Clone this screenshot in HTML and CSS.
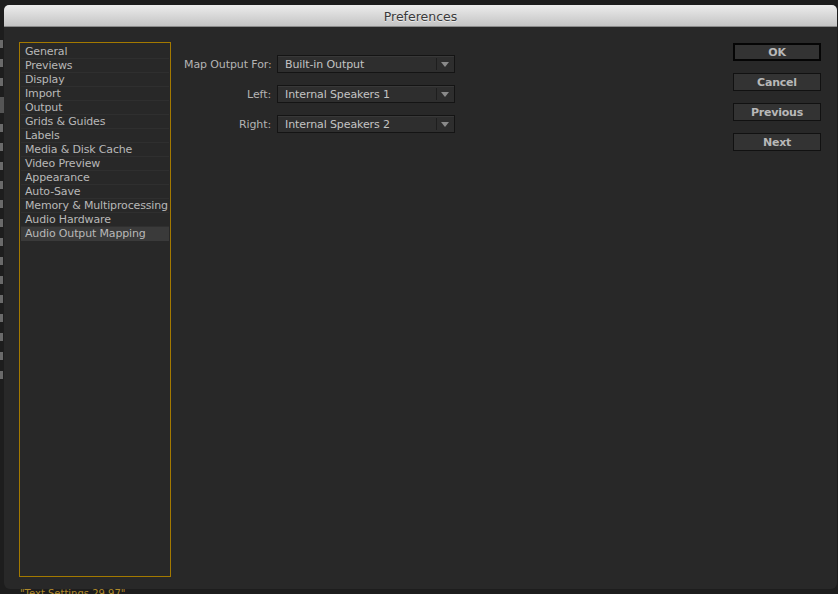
FILE: index.html
```html
<!DOCTYPE html>
<html>
<head>
<meta charset="utf-8">
<link rel="stylesheet" href="styles.css">
</head>
<body>
<div class="desktop">
  <div class="backdrop">
    <div class="bd-col">
      <i></i><i></i><i></i><i class="bd-sel"></i>
      <i></i><i></i><i></i>
      <i></i><i></i><i></i><i></i><i></i><i></i><i></i><i></i><i></i><i></i><i></i>
    </div>
    <div class="bd-status">"Text Settings 29.97"</div>
  </div>
  <div class="dialog">
    <div class="titlebar">Preferences</div>
    <div class="dbody">
      <ul class="cats">
        <li>General</li>
        <li>Previews</li>
        <li>Display</li>
        <li>Import</li>
        <li>Output</li>
        <li>Grids &amp; Guides</li>
        <li>Labels</li>
        <li>Media &amp; Disk Cache</li>
        <li>Video Preview</li>
        <li>Appearance</li>
        <li>Auto-Save</li>
        <li>Memory &amp; Multiprocessing</li>
        <li>Audio Hardware</li>
        <li class="sel">Audio Output Mapping</li>
      </ul>
      <div class="form">
        <label class="lbl">Map Output For:</label>
        <div class="select"><span class="val">Built-in Output</span><span class="arrow"></span></div>
        <label class="lbl">Left:</label>
        <div class="select"><span class="val">Internal Speakers 1</span><span class="arrow"></span></div>
        <label class="lbl">Right:</label>
        <div class="select"><span class="val">Internal Speakers 2</span><span class="arrow"></span></div>
      </div>
      <div class="buttons">
        <button class="btn default">OK</button>
        <button class="btn">Cancel</button>
        <button class="btn">Previous</button>
        <button class="btn">Next</button>
      </div>
    </div>
  </div>
</div>
</body>
</html>
```
FILE: styles.css
```css
html, body {
  margin: 0;
  padding: 0;
  background: #1c1c1c;
  font-family: "DejaVu Sans", "Liberation Sans", sans-serif;
}
.desktop {
  position: relative;
  width: 838px;
  height: 594px;
  overflow: hidden;
  background: #1d1d1d;
}
.backdrop {
  position: absolute;
  inset: 0;
}
.bd-col {
  position: absolute;
  left: 0;
  top: 40px;
  width: 4px;
  display: flex;
  flex-direction: column;
  gap: 11px;
}
.bd-col i {
  display: block;
  width: 3px;
  height: 8px;
  background: #6a6a6a;
}
.bd-col .bd-sel {
  height: 16px;
  width: 4px;
  background: #555;
}
.bd-status {
  position: absolute;
  left: 20px;
  top: 589px;
  font-size: 10px;
  line-height: 10px;
  color: #b08a2a;
}
.dialog {
  position: absolute;
  left: 4px;
  top: 5px;
  width: 833px;
  height: 584px;
  background: #282828;
  border-radius: 5px 5px 6px 6px;
  display: flex;
  flex-direction: column;
  overflow: hidden;
}
.titlebar {
  height: 22px;
  flex: none;
  background: linear-gradient(#ececec, #d4d4d4 60%, #c4c4c4);
  border-bottom: 1px solid #8a8a8a;
  box-sizing: border-box;
  text-align: center;
  font-size: 12.5px;
  line-height: 23px;
  color: #3a3a3a;
  text-shadow: 0 1px 0 rgba(255,255,255,0.6);
}
.dbody {
  flex: 1;
  display: flex;
  padding: 15px 16px 12px 15px;
}
.cats {
  list-style: none;
  margin: 0;
  padding: 2px 1px 1px;
  width: 148px;
  border: 1px solid #a37900;
  flex: none;
}
.cats li {
  height: 14px;
  line-height: 14px;
  font-size: 11px;
  color: #b8b8b8;
  padding-left: 4px;
  border-bottom: 1px solid #2f2f2f;
  box-sizing: border-box;
  white-space: nowrap;
  overflow: hidden;
  letter-spacing: -0.15px;
}
.cats li.sel {
  background: #3a3a3a;
  border-bottom-color: #3a3a3a;
}
.form {
  margin-left: 13px;
  margin-top: 13px;
  display: grid;
  grid-template-columns: 87px 178px;
  grid-auto-rows: 18px;
  column-gap: 6px;
  row-gap: 12px;
  align-content: start;
  align-items: center;
}
.lbl {
  text-align: right;
  font-size: 11px;
  color: #b4b4b4;
  white-space: nowrap;
  letter-spacing: -0.1px;
}
.select {
  height: 18px;
  box-sizing: border-box;
  border: 1px solid #141414;
  background: #2e2e2e;
  box-shadow: inset 0 1px 0 #383838;
  display: flex;
  align-items: center;
}
.select .val {
  flex: 1;
  padding-left: 7px;
  font-size: 11px;
  color: #c4c4c4;
  white-space: nowrap;
  letter-spacing: -0.1px;
}
.select .arrow {
  width: 17px;
  height: 12px;
  border-left: 1px solid #1e1e1e;
  position: relative;
}
.select .arrow::after {
  content: "";
  position: absolute;
  left: 4px;
  top: 4px;
  border-left: 4px solid transparent;
  border-right: 4px solid transparent;
  border-top: 5px solid #8a8a8a;
}
.buttons {
  margin-left: auto;
  margin-top: 1px;
  display: flex;
  flex-direction: column;
  gap: 12px;
  width: 88px;
}
.btn {
  height: 18px;
  box-sizing: border-box;
  border: 1px solid #111;
  background: #333;
  color: #b8b8b8;
  font-family: "DejaVu Sans", "Liberation Sans", sans-serif;
  font-size: 11px;
  font-weight: bold;
  padding: 1px 0 0;
  line-height: 16px;
  text-align: center;
  letter-spacing: -0.2px;
}
.btn.default {
  border: 2px solid #050505;
  line-height: 14px;
}
```
